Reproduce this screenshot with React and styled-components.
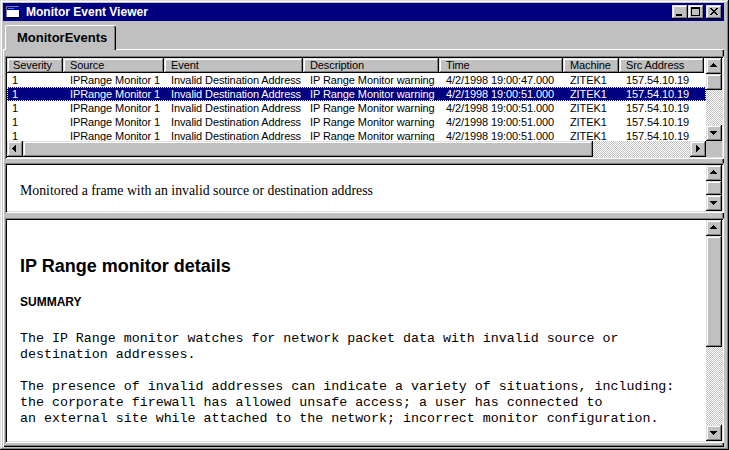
import React from 'react';
import styled, { createGlobalStyle, css } from 'styled-components';

const GlobalStyle = createGlobalStyle`
  html, body { margin: 0; padding: 0; background: #c0c0c0; }
  * { box-sizing: border-box; }
`;

// win95 bevels
const raised = css`
  background: #c0c0c0;
  box-shadow: inset -1px -1px #000, inset 1px 1px #dfdfdf, inset -2px -2px #808080, inset 2px 2px #fff;
`;
const sunken = css`
  box-shadow: inset 1px 1px #808080, inset -1px -1px #fff, inset 2px 2px #000, inset -2px -2px #dfdfdf;
`;
const checker = css`
  background-color: #c0c0c0;
  background-image: conic-gradient(#fff 25%, #c0c0c0 0 50%, #fff 0 75%, #c0c0c0 0);
  background-size: 2px 2px;
`;

const COLS = '56px 101px 139px 136px 124px 56px 85px';

const Window = styled.div`
  width: 729px;
  height: 450px;
  padding: 3px;
  display: flex;
  flex-direction: column;
  background: #c0c0c0;
  box-shadow: inset -1px -1px #000, inset 1px 1px #dfdfdf, inset -2px -2px #808080, inset 2px 2px #fff;
  font-family: "Liberation Sans", Arial, sans-serif;
  overflow: hidden;
`;

const TitleBar = styled.div`
  height: 18px;
  margin-right: 2px;
  padding: 0 2px;
  display: flex;
  align-items: center;
  background: #000080;
  color: #fff;
`;

const TitleText = styled.span`
  flex: 1;
  margin-left: 5px;
  font-size: 12px;
  font-weight: bold;
  line-height: 18px;
`;

const CaptionButton = styled.div`
  ${raised};
  width: 16px;
  height: 14px;
  margin-left: ${(p) => p.$gap || 0}px;
  display: flex;
`;

const TabStrip = styled.div`
  height: 28px;
  padding: 3px 0 0 2px;
  margin-right: 2px;
  display: flex;
  align-items: flex-end;
`;

const Tab = styled.div`
  width: 111px;
  height: 25px;
  margin-bottom: -1px;
  padding: 0 0 1px 11px;
  display: flex;
  align-items: center;
  font-size: 13px;
  font-weight: bold;
  color: #000;
  background: #c0c0c0;
  border-top: 1px solid #fff;
  border-left: 1px solid #fff;
  border-radius: 2px 2px 0 0;
  box-shadow: inset -1px 0 #000, inset -2px 0 #808080;
  position: relative;
  z-index: 1;
`;

const TabPanel = styled.div`
  flex: 1;
  margin-right: 2px;
  padding: 6px 0 4px 1px;
  display: flex;
  flex-direction: column;
  border-top: 1px solid #fff;
  border-left: 1px solid #fff;
  box-shadow: inset -1px -1px #000, inset -2px -2px #808080;
`;

const Pane = styled.div`
  ${sunken};
  padding: 2px;
  background: #fff;
  height: ${(p) => (p.$height ? `${p.$height}px` : 'auto')};
  flex: ${(p) => (p.$height ? 'none' : 1)};
  margin-top: ${(p) => p.$top || 0}px;
  display: flex;
  min-height: 0;
`;

const ListGrid = styled.div`
  flex: 1;
  display: grid;
  grid-template-columns: 1fr 16px;
  grid-template-rows: 1fr 16px;
  min-height: 0;
`;

const ListBody = styled.div`
  overflow: hidden;
  background: #fff;
  font-size: 11px;
  letter-spacing: -0.1px;
  color: #000;
`;

const HeaderRow = styled.div`
  display: grid;
  grid-template-columns: ${COLS};
  height: 15px;
`;

const HeaderCell = styled.div`
  ${raised};
  padding-left: 7px;
  line-height: 15px;
  white-space: nowrap;
  overflow: hidden;
  &:first-child { padding-left: 6px; }
`;

const Row = styled.div`
  display: grid;
  grid-template-columns: ${COLS};
  height: 14px;
  line-height: 14px;
  background: ${(p) => (p.$selected ? '#000080' : '#fff')};
  color: ${(p) => (p.$selected ? '#fff' : '#000')};
  outline: ${(p) => (p.$selected ? '1px dotted #ffff80' : 'none')};
  outline-offset: -1px;
`;

const Cell = styled.div`
  padding-left: 7px;
  white-space: nowrap;
  overflow: hidden;
  &:first-child { padding-left: 5px; }
`;

const ScrollCol = styled.div`
  width: 16px;
  display: flex;
  flex-direction: column;
  background: #c0c0c0;
`;

const ScrollRow = styled.div`
  height: 16px;
  display: flex;
  background: #c0c0c0;
`;

const ScrollButton = styled.div`
  ${raised};
  width: 16px;
  height: 16px;
  flex: none;
  display: flex;
`;

const Thumb = styled.div`
  ${raised};
  flex: ${(p) => (p.$size ? 'none' : 1)};
  ${(p) => (p.$vertical ? 'height' : 'width')}: ${(p) => (p.$size ? `${p.$size}px` : 'auto')};
`;

const Track = styled.div`
  ${checker};
  flex: 1;
`;

const Corner = styled.div`
  background: #c0c0c0;
`;

const DescText = styled.div`
  flex: 1;
  padding: 18px 0 0 13px;
  font-family: "Liberation Serif", "Times New Roman", serif;
  font-size: 13.8px;
  line-height: 16px;
  color: #000;
  white-space: nowrap;
  overflow: hidden;
`;

const Details = styled.div`
  flex: 1;
  padding: 35px 0 0 13px;
  color: #000;
  overflow: hidden;
`;

const Heading = styled.div`
  font-size: 18px;
  font-weight: bold;
  line-height: 22px;
`;

const SubHeading = styled.div`
  margin-top: 17px;
  font-size: 12px;
  font-weight: bold;
  line-height: 16px;
`;

const Mono = styled.pre`
  margin: 21px 0 0;
  font-family: "Liberation Mono", "Courier New", monospace;
  font-size: 13.3px;
  line-height: 16px;
`;

const ARROWS = {
  up: 'M7 5h1v1H7zM6 6h3v1H6zM5 7h5v1H5zM4 8h7v1H4z',
  down: 'M4 6h7v1H4zM5 7h5v1H5zM6 8h3v1H6zM7 9h1v1H7z',
  left: 'M5 7h1v1H5zM6 6h1v3H6zM7 5h1v5H7zM8 4h1v7H8z',
  right: 'M6 4h1v7H6zM7 5h1v5H7zM8 6h1v3H8zM9 7h1v1H9z',
};

const Arrow = ({ dir }) => (
  <svg width="16" height="16" viewBox="0 0 16 16" shapeRendering="crispEdges">
    <path d={ARROWS[dir]} fill="#000" />
  </svg>
);

const VScroll = ({ thumb }) => (
  <ScrollCol>
    <ScrollButton><Arrow dir="up" /></ScrollButton>
    <Thumb $vertical $size={thumb} />
    {thumb && <Track />}
    <ScrollButton><Arrow dir="down" /></ScrollButton>
  </ScrollCol>
);

const HScroll = ({ thumb }) => (
  <ScrollRow>
    <ScrollButton><Arrow dir="left" /></ScrollButton>
    <Thumb $size={thumb} />
    <Track />
    <ScrollButton><Arrow dir="right" /></ScrollButton>
  </ScrollRow>
);

const AppIcon = () => (
  <svg width="16" height="16" viewBox="0 0 16 16" shapeRendering="crispEdges">
    <rect x="1" y="2" width="14" height="12" fill="#808080" />
    <rect x="2" y="3" width="12" height="10" fill="#fff" />
    <rect x="2" y="3" width="12" height="3" fill="#0000c0" />
    <rect x="3" y="4" width="6" height="1" fill="#4080ff" />
    <rect x="1" y="13" width="14" height="1" fill="#000" />
    <rect x="14" y="2" width="1" height="12" fill="#000" />
  </svg>
);

const Glyph = ({ d }) => (
  <svg width="16" height="14" viewBox="0 0 16 14" shapeRendering="crispEdges">
    <path d={d} fill="#000" fillRule="evenodd" />
  </svg>
);

const MIN = 'M4 9h6v2H4z';
const MAX = 'M3 2h9v9H3zM4 4v6h7V4z';
const CLOSE =
  'M4 3h2v1H4zM10 3h2v1h-2zM5 4h2v1H5zM9 4h2v1H9zM6 5h4v1H6zM7 6h2v1H7zM6 7h4v1H6zM5 8h2v1H5zM9 8h2v1H9zM4 9h2v1H4zM10 9h2v1h-2z';

const HEADERS = ['Severity', 'Source', 'Event', 'Description', 'Time', 'Machine', 'Src Address'];

const events = [47, 51, 51, 51, 51].map((sec, i) => ({
  id: i,
  cells: [
    '1',
    'IPRange Monitor 1',
    'Invalid Destination Address',
    'IP Range Monitor warning',
    `4/2/1998 19:00:${sec}.000`,
    'ZITEK1',
    '157.54.10.19',
  ],
}));

const DETAILS = `The IP Range monitor watches for network packet data with invalid source or
destination addresses.

The presence of invalid addresses can indicate a variety of situations, including:
the corporate firewall has allowed unsafe access; a user has connected to
an external site while attached to the network; incorrect monitor configuration.`;

export default function App() {
  return (
    <>
      <GlobalStyle />
      <Window>
        <TitleBar>
          <AppIcon />
          <TitleText>Monitor Event Viewer</TitleText>
          <CaptionButton><Glyph d={MIN} /></CaptionButton>
          <CaptionButton><Glyph d={MAX} /></CaptionButton>
          <CaptionButton $gap={2}><Glyph d={CLOSE} /></CaptionButton>
        </TitleBar>
        <TabStrip>
          <Tab>MonitorEvents</Tab>
        </TabStrip>
        <TabPanel>
          <Pane $height={103}>
            <ListGrid>
              <ListBody>
                <HeaderRow>
                  {HEADERS.map((h) => <HeaderCell key={h}>{h}</HeaderCell>)}
                </HeaderRow>
                {events.map((ev) => (
                  <Row key={ev.id} $selected={ev.id === 1}>
                    {ev.cells.map((c, j) => <Cell key={j}>{c}</Cell>)}
                  </Row>
                ))}
              </ListBody>
              <VScroll thumb={16} />
              <HScroll thumb={570} />
              <Corner />
            </ListGrid>
          </Pane>
          <Pane $height={50} $top={4}>
            <DescText>Monitored a frame with an invalid source or destination address</DescText>
            <VScroll />
          </Pane>
          <Pane $top={5}>
            <Details>
              <Heading>IP Range monitor details</Heading>
              <SubHeading>SUMMARY</SubHeading>
              <Mono>{DETAILS}</Mono>
            </Details>
            <VScroll thumb={111} />
          </Pane>
        </TabPanel>
      </Window>
    </>
  );
}
